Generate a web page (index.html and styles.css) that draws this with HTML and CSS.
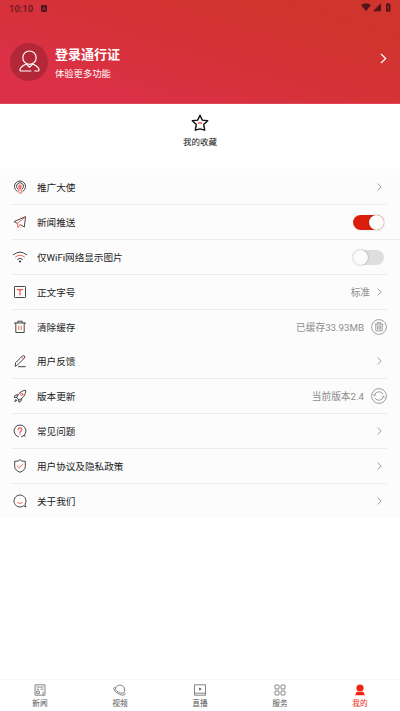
FILE: index.html
```
<!DOCTYPE html>
<html lang="zh-CN">
<head>
    <meta charset="UTF-8">
    <meta name="viewport" content="width=device-width, initial-scale=1.0">
    <title>我的</title>
    <link rel="stylesheet" href="styles.css">
</head>
<body>

    <!-- Header -->
    <header>
        <div class="status-bar">
            <span class="time">10:10</span>
            <svg class="app-badge" viewBox="0 0 6 7"><rect width="6" height="7" rx="1" fill="#501320"/><path d="M1.700 5.300L3 1.800l1.300 3.500M2.200 4.300h1.600" fill="none" stroke="#b53442" stroke-width=".7"/></svg>
            <svg class="signals" viewBox="0 0 30 9" fill="#55151a">
                <path d="M0 2Q5-1.600 10 2L5 8.300z"/>
                <path d="M20 .3V8.300H11.800z"/>
                <path d="M25 .9h1.200V0h2v.9h1.300v7.700H25z"/>
                <path d="M27.500 2.200l-1.100 2.500h1.500l-.8 2.100" fill="none" stroke="#c13034" stroke-width=".6"/>
            </svg>
        </div>
        <div class="profile">
            <div class="avatar">
                <svg viewBox="0 0 22 24" fill="none" stroke="#fff" stroke-width="1.200" stroke-linecap="round" stroke-linejoin="round">
                    <circle cx="11" cy="8" r="7"/>
                    <path d="M7.500 14.600C4.500 16.500 1 17.500 1 21q0 1 1 1h10.500M14.500 14.600c3 1.900 6.500 2.900 6.500 6.400q0 1-1 1h-3.500M8 15l3 3 3-3"/>
                </svg>
            </div>
            <div class="profile-text">
                <h1>登录通行证</h1>
                <p>体验更多功能</p>
            </div>
            <svg class="go" viewBox="0 0 7 11"><path d="M1 1l4.700 4.500L1 10" fill="none" stroke="#fff" stroke-width="1.200"/></svg>
        </div>
    </header>

    <!-- Favorites -->
    <div class="favorite">
        <svg viewBox="0 0 18 18"><path d="M9 1.200l2.300 4.900 5.400.7-4 3.800 1 5.600L9 14.900l-4.700 1.300 1-5.600-4-3.800 5.400-.7z" fill="none" stroke="#111" stroke-width="1.400" stroke-linejoin="round"/><path d="M7 9h4" stroke="#f33b30" stroke-width="1.300"/></svg>
        <span>我的收藏</span>
    </div>

    <!-- Settings -->
    <ul class="settings">
        <li>
            <svg class="icon" viewBox="0 0 14 14"><path d="M4 11.300a5.600 5.600 0 1 1 6 0M4.700 8.900a3.500 3.500 0 1 1 4.600 0"/><path class="red" d="M6 7.500a1.500 1.500 0 1 1 2 0M6.200 6.500v4l-1-.4c-.2 1.400.5 2.100 1 3h2.100l.7-3.200-1.500-.7V6.500z"/></svg>
            <span class="label">推广大使</span>
            <svg class="arrow" viewBox="0 0 5 8"><path d="M.6.6L4.200 4 .6 7.400"/></svg>
        </li>
        <li class="wide">
            <svg class="icon" viewBox="0 0 14 14"><path d="M4.300 8.300L1 6.600 12.600 1.600 11.300 12 7.600 9.800"/><path class="red" d="M12.300 2L4.500 8.300l.5 4.300L7 9.500"/></svg>
            <span class="label">新闻推送</span>
            <span class="switch on"></span>
        </li>
        <li>
            <svg class="icon" viewBox="0 0 14 14"><path d="M.4 4.700Q7-.6 13.600 4.700M4.600 9.200q2.400-1.900 4.800 0"/><path class="red" d="M2.500 7Q7 3.300 11.500 7"/><circle cx="7" cy="11.500" r="1" fill="#222" stroke="none"/></svg>
            <span class="label">仅WiFi网络显示图片</span>
            <span class="switch"></span>
        </li>
        <li>
            <svg class="icon" viewBox="0 0 14 14"><rect x="1.500" y="1.500" width="11" height="11" rx=".7"/><path class="red bold" d="M4.300 4.600h5.400M7 4.600v5.400"/></svg>
            <span class="label">正文字号</span>
            <span class="value">标准</span>
            <svg class="arrow" viewBox="0 0 5 8"><path d="M.6.6L4.200 4 .6 7.400"/></svg>
        </li>
        <li class="no-line">
            <svg class="icon" viewBox="0 0 14 14"><path d="M1.500 3h11M4.800 2.600V1.200h4.400v1.400M2.800 3.200v9.300h8.400V3.200"/><path class="red" d="M5.800 6v3.800M8.200 6v3.800"/></svg>
            <span class="label">清除缓存</span>
            <span class="value">已缓存33.93MB</span>
            <svg class="round" viewBox="0 0 16 16"><circle cx="8" cy="8" r="7.400"/><path d="M3.800 5.200h8.400M6.300 5V3.600h3.400V5M4.800 5.400v6.400h6.400V5.400M6.600 6.500v4M8 6.500v4M9.400 6.500v4"/></svg>
        </li>
        <li>
            <svg class="icon" viewBox="0 0 14 14"><path d="M2.200 12l.4-3.200L9.300 2q1-.9 2 0t.1 2L4.700 10.700zM5.500 12.700h6.800"/><path class="red" d="M8.600 3l2 2"/></svg>
            <span class="label">用户反馈</span>
            <svg class="arrow" viewBox="0 0 5 8"><path d="M.6.6L4.200 4 .6 7.400"/></svg>
        </li>
        <li>
            <svg class="icon" viewBox="0 0 14 14"><path d="M5 9.800L3.700 8.500C5 4.800 8 1.700 12.700 1.300c0 4.500-2.400 7.700-6.200 9.500zM4.800 5.800L2.500 6 1 8.300l2.700.2M8.500 9.700L8 12l-2 1.200-.4-2.700M3 10.300l-1.200 2.200L4 11.400"/><circle class="red" cx="8.700" cy="5.400" r="1.200"/></svg>
            <span class="label">版本更新</span>
            <span class="value">当前版本2.4</span>
            <svg class="round" viewBox="0 0 16 16"><circle cx="8" cy="8" r="7.400"/><path d="M3.500 7.500A4.600 4.600 0 0 1 12 6M12.500 8.500A4.600 4.600 0 0 1 4 10M2.200 6.400l1.300 1.400 1.500-1M13.800 9.600l-1.300-1.400-1.500 1"/></svg>
        </li>
        <li>
            <svg class="icon" viewBox="0 0 14 14"><path d="M5.500 12.800A6 6 0 1 1 8.500 12.800M10.700 11.700l1.500.3"/><path class="red bold" d="M5.200 5.600c0-2.400 3.700-2.400 3.700 0C8.900 7 7 6.900 7 8.400M7 9.800v.4"/></svg>
            <span class="label">常见问题</span>
            <svg class="arrow" viewBox="0 0 5 8"><path d="M.6.6L4.200 4 .6 7.400"/></svg>
        </li>
        <li>
            <svg class="icon" viewBox="0 0 14 14"><path d="M7 .8l1.700 1.200 3.600.3v5.500c0 2.500-2.300 4.200-5.300 5.500-3-1.300-5.300-3-5.300-5.500V2.300L5.300 2z"/><path class="red" d="M4.200 6.900l2.100 2 3.700-3.600"/></svg>
            <span class="label">用户协议及隐私政策</span>
            <svg class="arrow" viewBox="0 0 5 8"><path d="M.6.6L4.200 4 .6 7.400"/></svg>
        </li>
        <li class="no-line">
            <svg class="icon" viewBox="0 0 14 14"><path d="M10.200 12.100A6 6 0 1 1 12 10.300l.8 2.200z"/><path class="red" d="M4.700 8.700q2.300 1.900 4.600 0"/></svg>
            <span class="label">关于我们</span>
            <svg class="arrow" viewBox="0 0 5 8"><path d="M.6.6L4.200 4 .6 7.400"/></svg>
        </li>
    </ul>

    <!-- Bottom tabs -->
    <nav class="tabs">
        <a href="#">
            <svg viewBox="0 0 14 12"><path d="M2 .8h10v10.400H2zM3.500 3h7M7.500 5.200h3M3.500 5.200H6M3.700 7h2.600v2.600H3.700zM10 7.500v3.700"/></svg>
            <span>新闻</span>
        </a>
        <a href="#">
            <svg viewBox="0 0 14 12"><path d="M2.300 5.500a4.700 4.700 0 1 1 8 3.600M2.300 5.500Q5 9.500 10.300 9.100M2.600 3.200C-.3 3.500.4 6 3.500 8.500s6.500 3.200 8 2.200.3-2 .3-2"/></svg>
            <span>视频</span>
        </a>
        <a href="#">
            <svg viewBox="0 0 14 12"><path d="M1.500.8h11v10.400h-11zM1.500 9.200h11"/><path d="M6.500 4v2l1.700-1z" fill="#444"/></svg>
            <span>直播</span>
        </a>
        <a href="#">
            <svg viewBox="0 0 14 12"><rect x="2" y="1" width="4" height="4" rx=".6"/><rect x="8" y="1" width="4" height="4" rx=".6"/><rect x="2" y="7" width="4" height="4" rx=".6"/><rect x="8" y="7" width="4" height="4" rx=".6"/></svg>
            <span>服务</span>
        </a>
        <a href="#" class="active">
            <svg viewBox="0 0 14 12"><circle cx="7" cy="4" r="3.600"/><path d="M2.300 11.200c0-2 1.300-3.300 2.700-3.800q2 1.200 4 0c1.400.5 2.700 1.800 2.700 3.800z"/></svg>
            <span>我的</span>
        </a>
    </nav>

</body>
</html>
```
FILE: styles.css
```
* {
    margin: 0;
    padding: 0;
    box-sizing: border-box;
}

body {
    display: flex;
    flex-direction: column;
    height: 711px;
    overflow: hidden;
    font-family: Roboto, "Noto Sans CJK SC", sans-serif;
    background: #fff;
    color: #222;
}

svg {
    display: block;
    flex: none;
}

/* Header */
header {
    height: 104px;
    background: linear-gradient(17deg, #dc3048 15%, #d53238 50%, #cf352c 85%);
    border-bottom: 1px solid #e04557;
}

.status-bar {
    display: flex;
    align-items: center;
    height: 16px;
    padding: 0 9px;
}

.time {
    font-size: 9.5px;
    font-weight: 500;
    color: #641825;
}

.app-badge {
    width: 6px;
    height: 7px;
    margin-left: 8px;
}

.signals {
    width: 30px;
    height: 9px;
    margin-left: auto;
    margin-top: -1px;
}

.profile {
    display: flex;
    align-items: center;
    height: 91px;
    padding: 0 13px 0 10px;
}

.avatar {
    display: flex;
    align-items: center;
    justify-content: center;
    width: 38px;
    height: 38px;
    border-radius: 50%;
    background: #b22838;
}

.avatar svg {
    width: 21px;
    height: 23px;
}

.profile-text {
    margin-left: 7px;
    margin-top: 5px;
    color: #fff;
}

.profile-text h1 {
    font-size: 13px;
    font-weight: 700;
    line-height: 19px;
}

.profile-text p {
    font-size: 9.3px;
    line-height: 19px;
}

.go {
    width: 7px;
    height: 11px;
    margin-left: auto;
    margin-top: -6px;
}

/* Favorites */
.favorite {
    display: flex;
    flex-direction: column;
    align-items: center;
    height: 65px;
    padding-top: 10px;
    font-size: 8.5px;
    color: #111;
}

.favorite svg {
    width: 18px;
    height: 18px;
}

.favorite span {
    margin-top: 4px;
    line-height: 13px;
}

/* Settings list */
.settings {
    padding: 1.5px 13px 0 12px;
    list-style: none;
    background: #fcfcfc;
}

.settings li {
    display: flex;
    align-items: center;
    height: 34.8px;
    padding-left: 1px;
    border-bottom: 1px solid #ebebeb;
}

.settings li.wide {
    margin-right: -13px;
    padding-right: 13px;
}

.settings li.no-line {
    border-color: transparent;
}

.icon {
    width: 14px;
    height: 14px;
    fill: none;
    stroke: #333;
    stroke-width: .9;
    stroke-linecap: round;
    stroke-linejoin: round;
}

.icon .red {
    stroke: #f0564c;
}

.icon .bold {
    stroke-width: 1.2;
}

.label {
    flex: 1;
    margin-left: 10px;
    font-size: 9.6px;
    color: #222;
}

.value {
    font-size: 9.7px;
    color: #8c8c8c;
}

.arrow {
    width: 5px;
    height: 8px;
    margin: 0 5px 0 7px;
    fill: none;
    stroke: #999;
    stroke-width: .9;
}

.round {
    width: 16px;
    height: 16px;
    margin-left: 7px;
    fill: none;
    stroke: #888;
    stroke-width: .8;
}

.switch {
    width: 31px;
    height: 15px;
    margin-top: 1px;
    margin-right: 3px;
    border-radius: 8px;
    background: #dedede;
}

.switch::after {
    content: "";
    display: block;
    width: 15px;
    height: 15px;
    border-radius: 50%;
    background: #fbfbfb;
    box-shadow: 0 0 2px rgba(0, 0, 0, 0.35);
}

.switch.on {
    background: #d91f0b;
}

.switch.on::after {
    margin-left: auto;
}

/* Bottom tabs */
.tabs {
    display: flex;
    height: 32px;
    margin-top: auto;
    border-top: 1px solid #f7f7f7;
}

.tabs a {
    flex: 1;
    display: flex;
    flex-direction: column;
    align-items: center;
    padding-top: 4px;
    font-size: 7.7px;
    line-height: 12px;
    color: #555;
    text-decoration: none;
}

.tabs svg {
    width: 14px;
    height: 12px;
    margin-bottom: 2px;
    fill: none;
    stroke: #666;
    stroke-width: .8;
}

.tabs .active {
    color: #f02410;
}

.tabs .active svg {
    fill: #f02410;
    stroke: none;
}
```
